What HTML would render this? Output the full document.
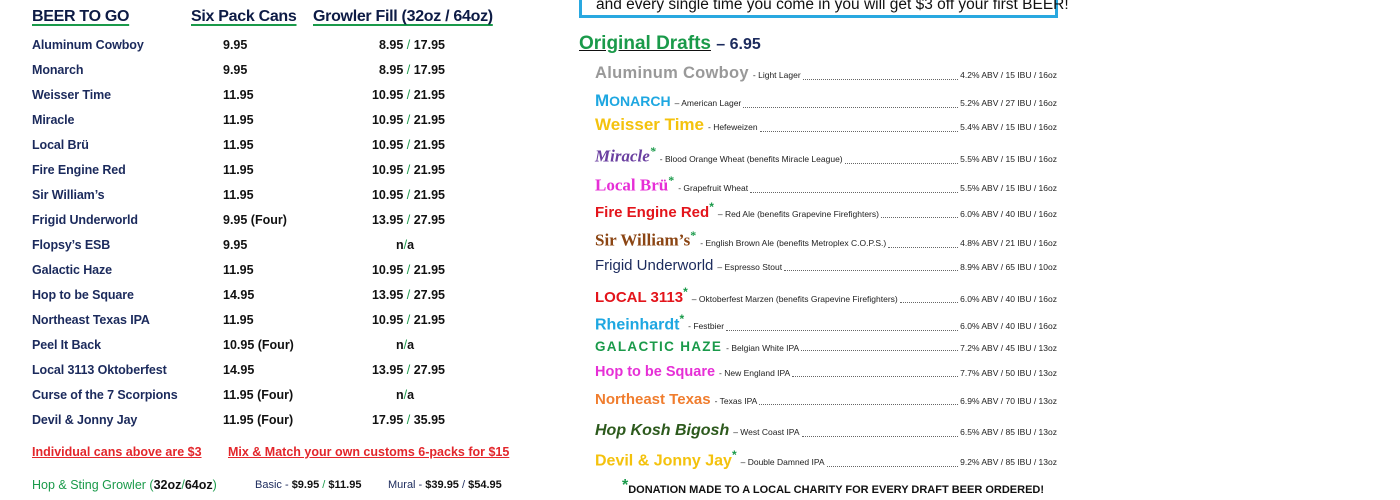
<!DOCTYPE html>
<html><head><meta charset="utf-8"><style>
*{margin:0;padding:0;box-sizing:border-box}
body{width:1400px;height:500px;background:#fff;position:relative;overflow:hidden;font-family:"Liberation Sans",sans-serif;font-weight:bold}
.a{position:absolute;white-space:nowrap}
.h{font-size:16px;color:#0d1b45;text-decoration:underline;text-decoration-color:#1a9a4a;text-decoration-thickness:2px;text-underline-offset:3px;letter-spacing:-0.3px}
.n{font-size:12.5px;color:#1b2a5c;left:32px;letter-spacing:-0.1px}
.p{font-size:12.5px;color:#111;left:223px}
.g{font-size:12.5px;color:#111;right:955px;text-align:right}
.g i{font-style:normal;color:#1a9a4a;font-weight:normal}
.c{font-size:12.5px;color:#111;left:396px}
.c i{font-style:normal;color:#1a9a4a;font-weight:normal}
.r{position:absolute;left:595px;width:462px;display:flex;align-items:baseline;white-space:nowrap}
.r .nm{font-weight:900;flex:none}
.r .d{font-size:8.5px;font-weight:normal;color:#222;flex:none;padding-left:4px}
.r .dt{flex:1;border-bottom:1px dotted #666;margin:0 2px;height:1px;align-self:flex-end;margin-bottom:3px}
.r .s{font-size:8.5px;font-weight:normal;color:#222;flex:none}
.st{color:#1a9a4a;font-size:12px;vertical-align:super;font-weight:bold}
</style></head><body>
<div class="a h" style="left:32px;top:8px">BEER TO GO</div>
<div class="a h" style="left:191px;top:8px">Six Pack Cans</div>
<div class="a h" style="left:313px;top:8px">Growler Fill (32oz / 64oz)</div>

<div class="a n" style="top:38px">Aluminum Cowboy</div><div class="a p" style="top:38px">9.95</div><div class="a g" style="top:38px">8.95 <i>/</i> 17.95</div>
<div class="a n" style="top:63px">Monarch</div><div class="a p" style="top:63px">9.95</div><div class="a g" style="top:63px">8.95 <i>/</i> 17.95</div>
<div class="a n" style="top:88px">Weisser Time</div><div class="a p" style="top:88px">11.95</div><div class="a g" style="top:88px">10.95 <i>/</i> 21.95</div>
<div class="a n" style="top:113px">Miracle</div><div class="a p" style="top:113px">11.95</div><div class="a g" style="top:113px">10.95 <i>/</i> 21.95</div>
<div class="a n" style="top:138px">Local Brü</div><div class="a p" style="top:138px">11.95</div><div class="a g" style="top:138px">10.95 <i>/</i> 21.95</div>
<div class="a n" style="top:163px">Fire Engine Red</div><div class="a p" style="top:163px">11.95</div><div class="a g" style="top:163px">10.95 <i>/</i> 21.95</div>
<div class="a n" style="top:188px">Sir William’s</div><div class="a p" style="top:188px">11.95</div><div class="a g" style="top:188px">10.95 <i>/</i> 21.95</div>
<div class="a n" style="top:213px">Frigid Underworld</div><div class="a p" style="top:213px">9.95 (Four)</div><div class="a g" style="top:213px">13.95 <i>/</i> 27.95</div>
<div class="a n" style="top:238px">Flopsy’s ESB</div><div class="a p" style="top:238px">9.95</div><div class="a c" style="top:238px">n<i>/</i>a</div>
<div class="a n" style="top:263px">Galactic Haze</div><div class="a p" style="top:263px">11.95</div><div class="a g" style="top:263px">10.95 <i>/</i> 21.95</div>
<div class="a n" style="top:288px">Hop to be Square</div><div class="a p" style="top:288px">14.95</div><div class="a g" style="top:288px">13.95 <i>/</i> 27.95</div>
<div class="a n" style="top:313px">Northeast Texas IPA</div><div class="a p" style="top:313px">11.95</div><div class="a g" style="top:313px">10.95 <i>/</i> 21.95</div>
<div class="a n" style="top:338px">Peel It Back</div><div class="a p" style="top:338px">10.95 (Four)</div><div class="a c" style="top:338px">n<i>/</i>a</div>
<div class="a n" style="top:363px">Local 3113 Oktoberfest</div><div class="a p" style="top:363px">14.95</div><div class="a g" style="top:363px">13.95 <i>/</i> 27.95</div>
<div class="a n" style="top:388px">Curse of the 7 Scorpions</div><div class="a p" style="top:388px">11.95 (Four)</div><div class="a c" style="top:388px">n<i>/</i>a</div>
<div class="a n" style="top:413px">Devil &amp; Jonny Jay</div><div class="a p" style="top:413px">11.95 (Four)</div><div class="a g" style="top:413px">17.95 <i>/</i> 35.95</div>

<div class="a" style="left:32px;top:445px;font-size:12.5px;color:#e3262b;text-decoration:underline">Individual cans above are $3</div>
<div class="a" style="left:228px;top:445px;font-size:12.5px;color:#e3262b;text-decoration:underline">Mix &amp; Match your own customs 6-packs for $15</div>
<div class="a" style="left:32px;top:478px;font-size:12.5px;color:#1a9a4a;font-weight:normal">Hop &amp; Sting Growler (<b style="color:#111">32oz</b>/<b style="color:#111">64oz</b>)</div>
<div class="a" style="left:255px;top:479px;font-size:11px;color:#1b2a5c;font-weight:normal">Basic - <b style="color:#111">$9.95</b> <span style="color:#1a9a4a">/</span> <b style="color:#111">$11.95</b></div>
<div class="a" style="left:388px;top:479px;font-size:11px;color:#1b2a5c;font-weight:normal">Mural - <b style="color:#111">$39.95</b> / <b style="color:#111">$54.95</b></div>

<div class="a" style="left:579px;top:-10px;width:479px;height:28px;border:3px solid #29a8e0;border-top:none"></div>
<div class="a" style="left:596px;top:-4px;font-size:15.5px;font-weight:normal;color:#111">and every single time you come in you will get $3 off your first BEER!</div>

<div class="a" style="left:579px;top:33px;font-size:19px;color:#1a9a4a"><span style="text-decoration:underline;text-decoration-color:#111">Original Drafts</span> <span style="color:#1b2a5c;font-size:16px">– 6.95</span></div>

<div class="r" style="top:64px"><span class="nm" style="color:#999;font-size:16.5px;letter-spacing:0.3px">Aluminum Cowboy</span><span class="d">- Light Lager</span><span class="dt"></span><span class="s">4.2% ABV / 15 IBU / 16oz</span></div>
<div class="r" style="top:91px"><span class="nm" style="color:#1ea7e1;font-size:17px">M<span style="font-size:14px">ONARCH</span></span><span class="d">– American Lager</span><span class="dt"></span><span class="s">5.2% ABV / 27 IBU / 16oz</span></div>
<div class="r" style="top:115px"><span class="nm" style="color:#f4c20d;font-size:17px">Weisser Time</span><span class="d">- Hefeweizen</span><span class="dt"></span><span class="s">5.4% ABV / 15 IBU / 16oz</span></div>
<div class="r" style="top:144px"><span class="nm" style="color:#6a3fa0;font-size:17px;font-family:'Liberation Serif',serif;font-style:italic">Miracle<span class="st">*</span></span><span class="d">- Blood Orange Wheat (benefits Miracle League)</span><span class="dt"></span><span class="s">5.5% ABV / 15 IBU / 16oz</span></div>
<div class="r" style="top:173px"><span class="nm" style="color:#e62fd6;font-size:17px;font-family:'Liberation Serif',serif">Local Brü<span class="st">*</span></span><span class="d">- Grapefruit Wheat</span><span class="dt"></span><span class="s">5.5% ABV / 15 IBU / 16oz</span></div>
<div class="r" style="top:200px"><span class="nm" style="color:#e3141b;font-size:15px">Fire Engine Red<span class="st">*</span></span><span class="d">– Red Ale (benefits Grapevine Firefighters)</span><span class="dt"></span><span class="s">6.0% ABV / 40 IBU / 16oz</span></div>
<div class="r" style="top:228px"><span class="nm" style="color:#8b4513;font-size:17px;font-family:'Liberation Serif',serif">Sir William’s<span class="st">*</span></span><span class="d">- English Brown Ale (benefits Metroplex C.O.P.S.)</span><span class="dt"></span><span class="s">4.8% ABV / 21 IBU / 16oz</span></div>
<div class="r" style="top:257px"><span class="nm" style="color:#1b2a5c;font-size:15px;font-weight:normal">Frigid Underworld</span><span class="d">– Espresso Stout</span><span class="dt"></span><span class="s">8.9% ABV / 65 IBU / 10oz</span></div>
<div class="r" style="top:285px"><span class="nm" style="color:#e3141b;font-size:15px">LOCAL 3113<span class="st">*</span></span><span class="d">– Oktoberfest Marzen (benefits Grapevine Firefighters)</span><span class="dt"></span><span class="s">6.0% ABV / 40 IBU / 16oz</span></div>
<div class="r" style="top:312px"><span class="nm" style="color:#1ea7e1;font-size:16px">Rheinhardt<span class="st">*</span></span><span class="d">- Festbier</span><span class="dt"></span><span class="s">6.0% ABV / 40 IBU / 16oz</span></div>
<div class="r" style="top:339px"><span class="nm" style="color:#1a9a4a;font-size:13.5px;letter-spacing:1.3px">GALACTIC HAZE</span><span class="d">- Belgian White IPA</span><span class="dt"></span><span class="s">7.2% ABV / 45 IBU / 13oz</span></div>
<div class="r" style="top:364px"><span class="nm" style="color:#e62fd6;font-size:14.5px">Hop to be Square</span><span class="d">- New England IPA</span><span class="dt"></span><span class="s">7.7% ABV / 50 IBU / 13oz</span></div>
<div class="r" style="top:391px"><span class="nm" style="color:#f07d2e;font-size:15px">Northeast Texas</span><span class="d">- Texas IPA</span><span class="dt"></span><span class="s">6.9% ABV / 70 IBU / 13oz</span></div>
<div class="r" style="top:422px"><span class="nm" style="color:#2d5a1d;font-size:16px;font-style:italic">Hop Kosh Bigosh</span><span class="d">– West Coast IPA</span><span class="dt"></span><span class="s">6.5% ABV / 85 IBU / 13oz</span></div>
<div class="r" style="top:448px"><span class="nm" style="color:#f4c20d;font-size:16px">Devil &amp; Jonny Jay<span class="st">*</span></span><span class="d">– Double Damned IPA</span><span class="dt"></span><span class="s">9.2% ABV / 85 IBU / 13oz</span></div>

<div class="a" style="left:622px;top:480px;font-size:11px;color:#111"><span style="color:#1a9a4a;font-size:16px;position:relative;top:-3px">*</span>DONATION MADE TO A LOCAL CHARITY FOR EVERY DRAFT BEER ORDERED!</div>
</body></html>
